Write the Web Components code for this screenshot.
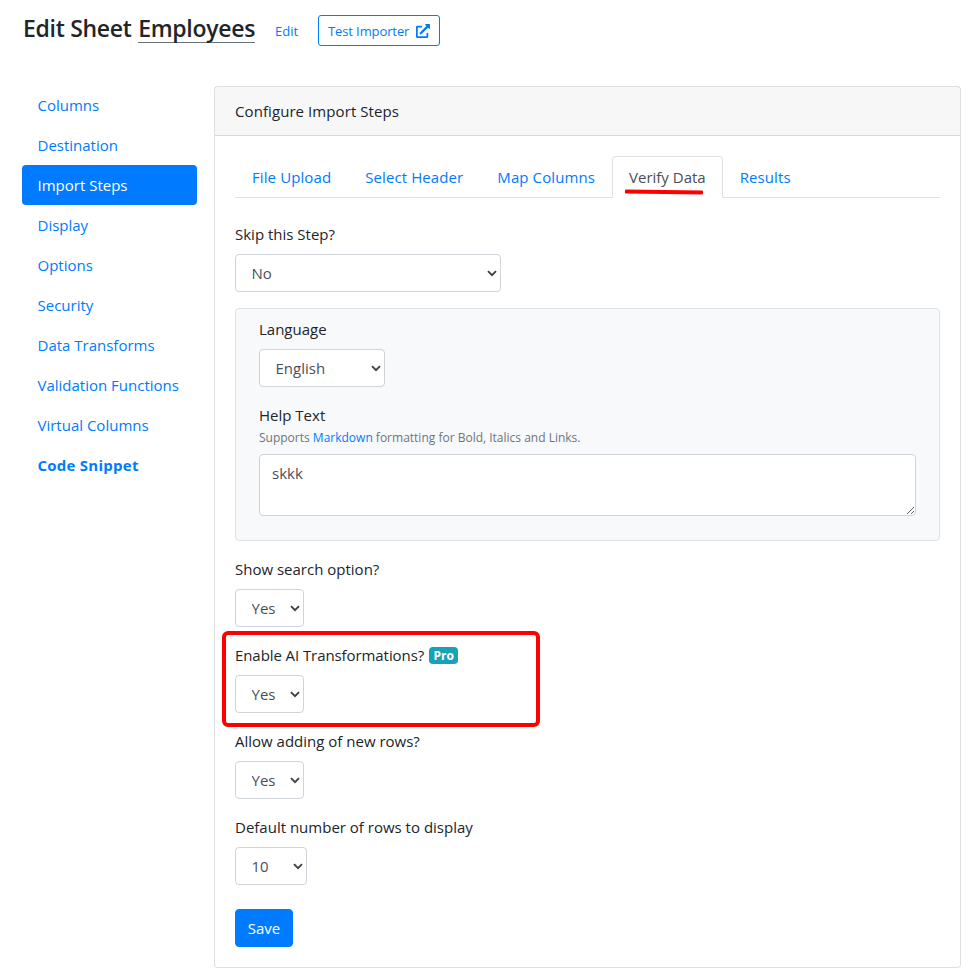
<!DOCTYPE html>
<html lang="en">
<head>
<meta charset="utf-8">
<title>Edit Sheet Employees</title>
<style>
  html, body { margin: 0; background: #fff; }
  body {
    font: 15px/24px "Open Sans", "Liberation Sans", sans-serif;
    color: #212529;
  }
</style>
</head>
<body>
<sheet-page>
  <sheet-header slot="header" name="Employees"></sheet-header>
  <side-nav slot="nav" active="Import Steps" strong="Code Snippet"
    items="Columns,Destination,Import Steps,Display,Options,Security,Data Transforms,Validation Functions,Virtual Columns,Code Snippet"></side-nav>
  <config-card slot="main" title="Configure Import Steps">
    <tab-bar active="Verify Data" items="File Upload,Select Header,Map Columns,Verify Data,Results"></tab-bar>

    <form-field label="Skip this Step?">
      <form-select value="No" width="266"></form-select>
    </form-field>

    <lang-panel>
      <form-field label="Language">
        <form-select value="English" width="126"></form-select>
      </form-field>
      <help-text value="skkk"></help-text>
    </lang-panel>

    <form-field label="Show search option?">
      <form-select value="Yes" width="69"></form-select>
    </form-field>
    <form-field label="Enable AI Transformations?" pro ringed>
      <form-select value="Yes" width="69"></form-select>
    </form-field>
    <form-field label="Allow adding of new rows?">
      <form-select value="Yes" width="69"></form-select>
    </form-field>
    <form-field label="Default number of rows to display" last>
      <form-select value="10" width="72"></form-select>
    </form-field>

    <save-button>Save</save-button>
  </config-card>
</sheet-page>

<script>
class SheetPage extends HTMLElement {
  constructor() {
    super();
    this.attachShadow({ mode : 'open' });
    this.shadowRoot.innerHTML = `
      <style>
        :host { display: block; width: 973px; }
        header { padding: 15px 0 0 23px; height: 85px; box-sizing: border-box; }
        .cols { display: flex; align-items: flex-start; gap: 17px; padding-left: 22px; }
        main { width: 747px; margin-top: 1px; }
      </style>
      <header><slot name="header"></slot></header>
      <div class="cols">
        <nav><slot name="nav"></slot></nav>
        <main><slot name="main"></slot></main>
      </div>
    `;
  }
}

class SheetHeader extends HTMLElement {
  constructor() {
    super();
    this.attachShadow({ mode : 'open' });
    this.shadowRoot.innerHTML = `
      <style>
        :host { display: flex; align-items: center; height: 31px; color: #212529; }
        h1 { margin: -5px 0 0; font-size: 23px; line-height: 28px; font-weight: 600; white-space: nowrap; letter-spacing: -.3px; }
        u { text-decoration: none; border-bottom: 1px solid #6c757d; display: inline-block; line-height: 27px; margin-left: 1px; }
        a { color: #007bff; text-decoration: none; font-size: 13px; }
        .edit { margin-left: 20px; }
        .btn {
          margin-left: 20px; height: 31px; width: 122px; box-sizing: border-box;
          border: 1px solid #007bff; border-radius: 3px;
          display: flex; align-items: center; justify-content: center; gap: 7px;
          letter-spacing: -.1px;
        }
        svg { width: 14px; height: 14px; fill: #007bff; display: block; }
      </style>
      <h1>Edit Sheet <u></u></h1>
      <a class="edit" href="#">Edit</a>
      <a class="btn" href="#">Test Importer
        <svg viewBox="0 0 512 512"><path d="M432,320H400a16,16,0,0,0-16,16V448H64V128H208a16,16,0,0,0,16-16V80a16,16,0,0,0-16-16H48A48,48,0,0,0,0,112V464a48,48,0,0,0,48,48H400a48,48,0,0,0,48-48V336A16,16,0,0,0,432,320ZM488,0h-128c-21.37,0-32.05,25.91-17,41l35.73,35.73L135,320.37a24,24,0,0,0,0,34L157.67,377a24,24,0,0,0,34,0L435.28,133.32,471,169c15,15,41,4.5,41-17V24A24,24,0,0,0,488,0Z"/></svg>
      </a>
    `;
    this.shadowRoot.querySelector('u').textContent = this.getAttribute('name');
  }
}

class SideNav extends HTMLElement {
  constructor() {
    super();
    this.attachShadow({ mode : 'open' });
    this.shadowRoot.innerHTML = `
      <style>
        :host { display: block; width: 175px; }
        a {
          display: block; height: 40px; box-sizing: border-box; padding: 8px 15.5px;
          color: #007bff; text-decoration: none; border-radius: 4px; white-space: nowrap;
        }
        a.active { background: #007bff; color: #fff; }
        a.strong { font-weight: 700; letter-spacing: .25px; }
      </style>
    `;
    let active = this.getAttribute('active');
    let strong = this.getAttribute('strong');
    this.getAttribute('items').split(',').forEach(name => {
      let a = document.createElement('a');
      a.href = '#';
      a.textContent = name;
      if (name == active) { a.className = 'active'; }
      if (name == strong) { a.className = 'strong'; }
      this.shadowRoot.append(a);
    });
  }
}

class ConfigCard extends HTMLElement {
  constructor() {
    super();
    this.attachShadow({ mode : 'open' });
    this.shadowRoot.innerHTML = `
      <style>
        :host {
          display: block; box-sizing: border-box; height: 882px; background: #fff;
          border: 1px solid rgba(0,0,0,.125); border-radius: 4px;
        }
        .head {
          height: 49px; box-sizing: border-box; padding: 12px 20px;
          background: rgba(0,0,0,.03); border-bottom: 1px solid rgba(0,0,0,.125);
          letter-spacing: .08px;
        }
        .body { padding: 20px; }
      </style>
      <div class="head"></div>
      <div class="body"><slot></slot></div>
    `;
    this.shadowRoot.querySelector('.head').textContent = this.getAttribute('title');
    this.removeAttribute('title');
  }
}

class TabBar extends HTMLElement {
  constructor() {
    super();
    this.attachShadow({ mode : 'open' });
    this.shadowRoot.innerHTML = `
      <style>
        :host { display: flex; height: 42px; box-sizing: border-box; border-bottom: 1px solid #dee2e6; margin-bottom: 24px; }
        a {
          position: relative; height: 42px; box-sizing: border-box; padding: 8px 16px;
          border: 1px solid transparent; border-radius: 4px 4px 0 0;
          color: #007bff; text-decoration: none; white-space: nowrap; letter-spacing: .1px;
        }
        a.active { color: #495057; background: #fff; border-color: #dee2e6 #dee2e6 #fff; letter-spacing: 0; }
        i {
          position: absolute; left: 12px; top: 33px; width: 78px; height: 4px;
          background: #f00; transform: rotate(.8deg); border-radius: 1px;
        }
      </style>
    `;
    let active = this.getAttribute('active');
    this.getAttribute('items').split(',').forEach(name => {
      let a = document.createElement('a');
      a.href = '#';
      a.textContent = name;
      if (name == active) {
        a.className = 'active';
        a.append(document.createElement('i'));
      }
      this.shadowRoot.append(a);
    });
  }
}

class FormField extends HTMLElement {
  constructor() {
    super();
    this.attachShadow({ mode : 'open' });
    this.shadowRoot.innerHTML = `
      <style>
        :host { display: block; position: relative; margin-bottom: 16px; }
        :host([last]) { margin-bottom: 24px; }
        label { display: block; height: 24px; margin-bottom: 8px; white-space: nowrap; }
        :host([pro]) label { letter-spacing: -.08px; }
        b {
          display: inline-block; margin-left: 1px; padding: 0 4.5px; height: 17px; line-height: 17px;
          background: #17a2b8; color: #fff; border-radius: 4px; letter-spacing: 0;
          font-size: 12px; font-weight: 700; vertical-align: 1px;
        }
        slot { display: block; }
        .ring {
          position: absolute; left: -13px; top: -12px; width: 318px; height: 96px;
          box-sizing: border-box; border: 4px solid #f00; border-radius: 6px; pointer-events: none;
        }
      </style>
      <label></label>
      <slot></slot>
    `;
    let label = this.shadowRoot.querySelector('label');
    label.textContent = this.getAttribute('label');
    if (this.hasAttribute('pro')) {
      let b = document.createElement('b');
      b.textContent = 'Pro';
      label.append(' ', b);
    }
    if (this.hasAttribute('ringed')) {
      let r = document.createElement('div');
      r.className = 'ring';
      this.shadowRoot.append(r);
    }
  }
}

class FormSelect extends HTMLElement {
  constructor() {
    super();
    this.attachShadow({ mode : 'open' });
    this.shadowRoot.innerHTML = `
      <style>
        :host { display: block; position: relative; height: 38px; }
        select {
          display: block; width: 100%; height: 38px; box-sizing: border-box; margin: 0;
          padding: 0 24px 0 15.5px; appearance: none; background: #fff;
          border: 1px solid #ced4da; border-radius: 4px;
          font: inherit; color: #495057;
        }
        svg { position: absolute; right: 4px; top: 16px; width: 10px; height: 7px; pointer-events: none; }
      </style>
      <select><option></option></select>
      <svg viewBox="0 0 10 7"><path d="M1 1.2l4 4 4-4" fill="none" stroke="#3c4248" stroke-width="1.9"/></svg>
    `;
    this.shadowRoot.querySelector('option').textContent = this.getAttribute('value');
    this.style.width = this.getAttribute('width') + 'px';
  }
}

class LangPanel extends HTMLElement {
  constructor() {
    super();
    this.attachShadow({ mode : 'open' });
    this.shadowRoot.innerHTML = `
      <style>
        :host {
          display: block; box-sizing: border-box; margin-bottom: 16px; padding: 8px 23px;
          background: #f8f9fa; border: 1px solid #dee2e6; border-radius: 4px;
        }
      </style>
      <slot></slot>
    `;
  }
}

class HelpText extends HTMLElement {
  constructor() {
    super();
    this.attachShadow({ mode : 'open' });
    this.shadowRoot.innerHTML = `
      <style>
        :host { display: block; margin-bottom: 16px; }
        label { display: block; height: 24px; }
        small { display: block; height: 19px; margin-bottom: 8px; font-size: 12px; line-height: 21px; color: #6c757d; white-space: nowrap; }
        a { color: #007bff; text-decoration: none; }
        textarea {
          display: block; width: 100%; height: 62px; box-sizing: border-box; margin: 0;
          padding: 6px 12px; background: #fff; border: 1px solid #ced4da; border-radius: 4px;
          font: inherit; color: #495057;
        }
      </style>
      <label>Help Text</label>
      <small>Supports <a href="#">Markdown</a> formatting for Bold, Italics and Links.</small>
      <textarea></textarea>
    `;
    this.shadowRoot.querySelector('textarea').textContent = this.getAttribute('value');
  }
}

class SaveButton extends HTMLElement {
  constructor() {
    super();
    this.attachShadow({ mode : 'open' });
    this.shadowRoot.innerHTML = `
      <style>
        :host { display: block; }
        button {
          display: block; width: 58px; height: 38px; padding: 0; background: #007bff; color: #fff;
          border: 1px solid #007bff; border-radius: 4px; font: inherit;
        }
      </style>
      <button><slot></slot></button>
    `;
  }
}

customElements.define('sheet-page', SheetPage);
customElements.define('sheet-header', SheetHeader);
customElements.define('side-nav', SideNav);
customElements.define('config-card', ConfigCard);
customElements.define('tab-bar', TabBar);
customElements.define('form-field', FormField);
customElements.define('form-select', FormSelect);
customElements.define('lang-panel', LangPanel);
customElements.define('help-text', HelpText);
customElements.define('save-button', SaveButton);
</script>
</body>
</html>
